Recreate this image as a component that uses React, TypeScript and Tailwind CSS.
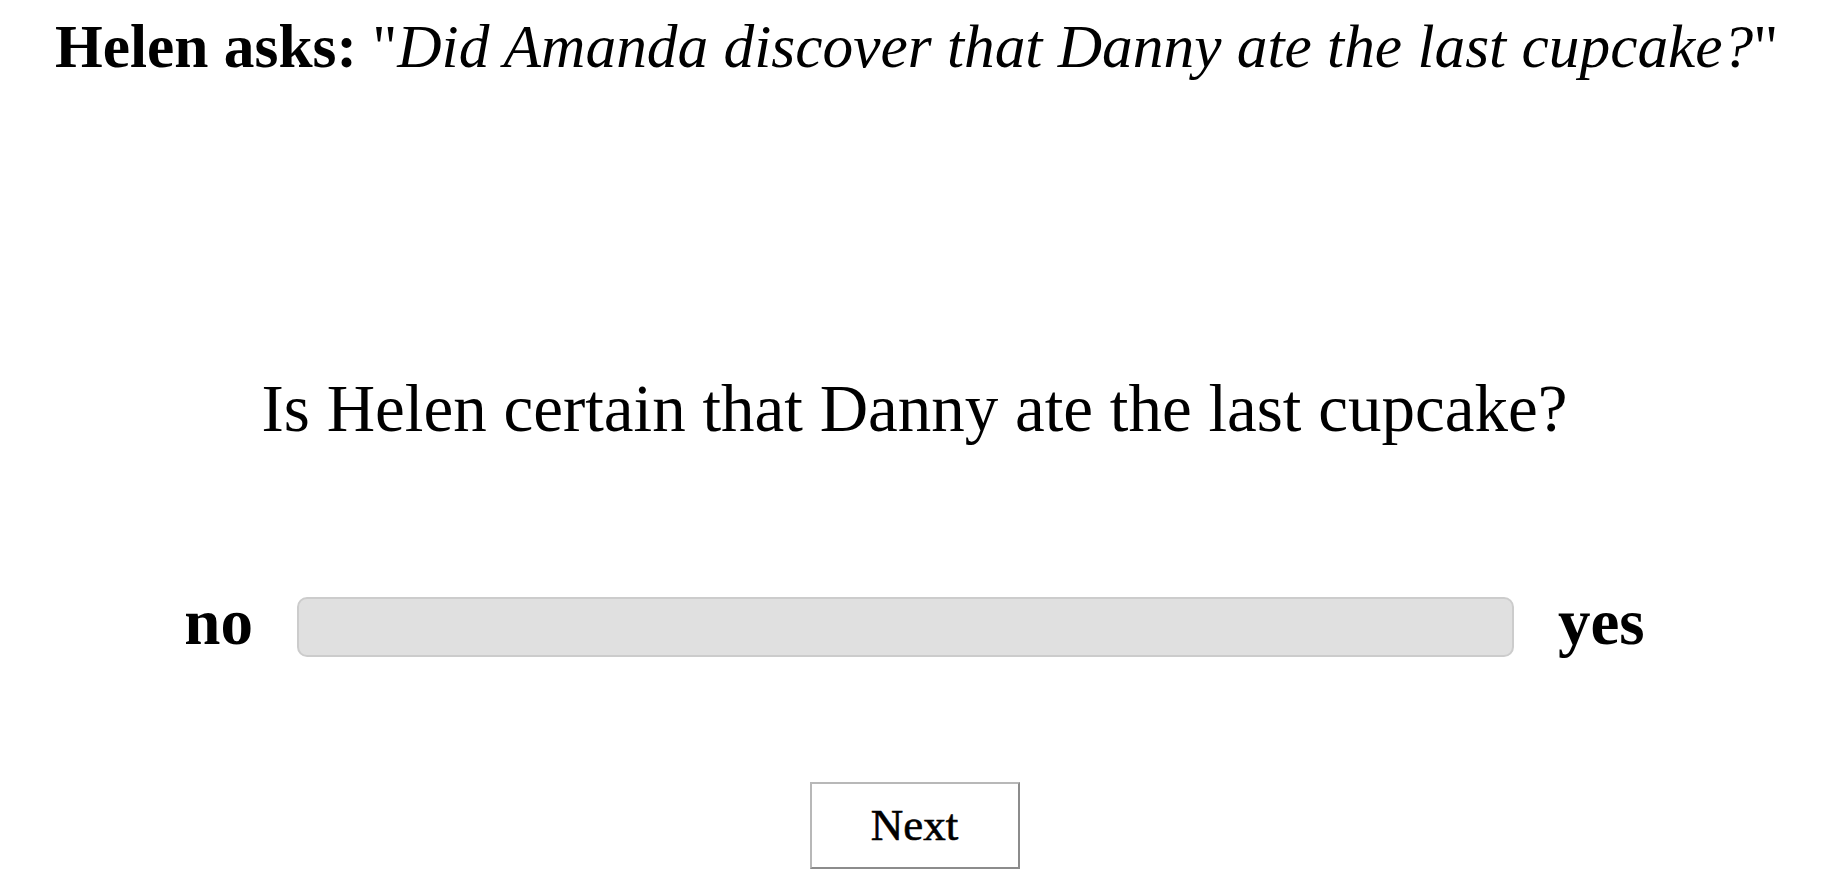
import React from "react";

export default function App() {
  return (
    <div className="w-[1847px] h-[876px] bg-white text-black overflow-hidden" style={{ fontFamily: '"Liberation Serif", "Times New Roman", serif' }}>
      <div className="pt-[16px] pl-[55px] text-[61.4px] leading-[61px] whitespace-nowrap">
        <span className="font-bold">Helen asks:</span> "<span className="italic">Did Amanda discover that Danny ate the last cupcake?</span>"
      </div>
      <div className="pr-[18px] flex flex-col items-center">
        <div className="mt-[298px] text-[67px] leading-[67px] whitespace-nowrap">
          Is Helen certain that Danny ate the last cupcake?
        </div>
        <div className="mt-[148px] flex items-center gap-[44px]">
          <span className="font-bold text-[65px] leading-[65px] pb-2">no</span>
          <div className="w-[1217px] h-[60px] rounded-[10px] bg-[#e0e0e0] border-2 border-[#cccccc]" />
          <span className="font-bold text-[65px] leading-[65px] pb-2">yes</span>
        </div>
        <button className="mt-[119px] w-[210px] h-[87px] bg-white border-2 border-[#b8b8b8] border-b-[#8c8c8c] border-r-[#8c8c8c] text-[45px] leading-none text-black [-webkit-text-stroke:0.6px_black]">
          Next
        </button>
      </div>
    </div>
  );
}
